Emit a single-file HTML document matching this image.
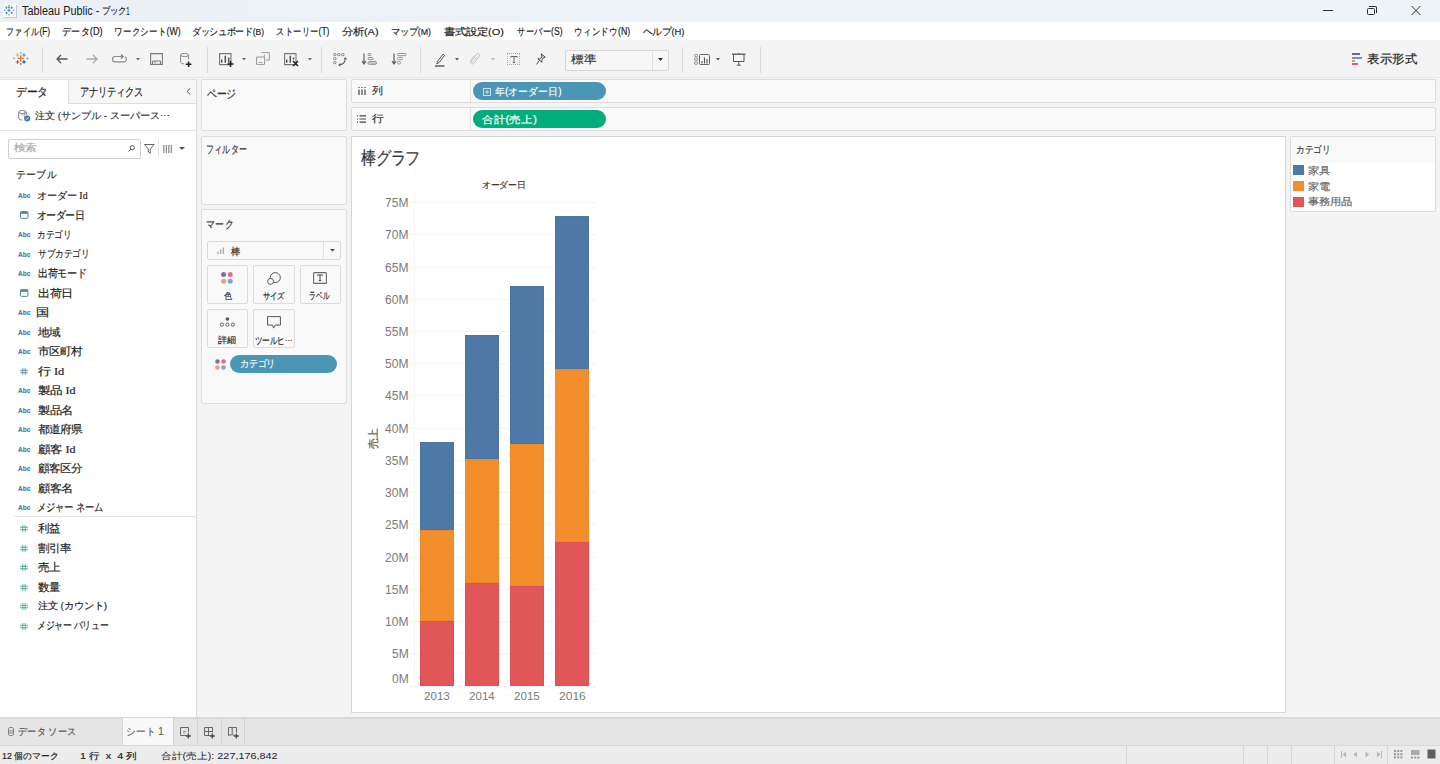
<!DOCTYPE html>
<html><head><meta charset="utf-8">
<style>
*{box-sizing:border-box;margin:0;padding:0}
html,body{width:1440px;height:764px;overflow:hidden;background:#f4f4f4;font-family:"Liberation Sans",sans-serif;color:#333;font-size:12px}
.a{position:absolute}
.t{position:absolute;white-space:pre;line-height:1;transform-origin:0 0;-webkit-text-stroke:0.2px currentColor}
svg{position:absolute;overflow:visible}
.shelf{position:absolute;background:#f9f9f9;border:1px solid #dcdcdc;border-radius:2px}
.btn{position:absolute;background:#f9f9f9;border:1px solid #dcdcdc;border-radius:2px}
.gl{position:absolute;left:410px;width:185px;height:1px;background:#f3f3f3}
.vs{position:absolute;width:1px;background:#d9d9d9}
</style></head><body>
<!-- title bar -->
<div class="a" style="left:0;top:0;width:1440px;height:22px;background:linear-gradient(90deg,#ebf0f7 0%,#eef3f9 60%,#eef3f8 100%)"></div>
<div class="a" style="left:2.5px;top:3.8px;width:13px;height:13px;background:#f8f9fb;box-shadow:1px 1px 0 #c5cad0"></div>
<svg style="left:2.5px;top:3.8px" width="13" height="13" viewBox="0 0 13 13"><g fill="#4a8bc6"><path d="M6 2.4v1.8M5.1 3.3h1.8" stroke="#4a8bc6" stroke-width="1"/><circle cx="6" cy="1.5" r="0.7"/><circle cx="6" cy="10.8" r="0.7"/><circle cx="1.8" cy="6.2" r="0.7"/><circle cx="10.6" cy="6.2" r="0.7"/></g><g stroke="#4a8bc6" stroke-width="1.1"><path d="M6 4.6v3.4M4.3 6.3h3.4"/><path d="M3.5 2.6v2.2M2.4 3.7h2.2"/><path d="M8.7 2.6v2.2M7.6 3.7h2.2"/><path d="M3.5 7.7v2.2M2.4 8.8h2.2"/><path d="M8.7 7.7v2.2M7.6 8.8h2.2"/></g></svg>
<div class="a" style="left:1323px;top:10px;width:10px;height:1px;background:#2a2a2a"></div>
<div class="a" style="left:1367px;top:8px;width:8px;height:7px;border:1px solid #2a2a2a;border-radius:1.5px"></div>
<div class="a" style="left:1369px;top:6px;width:8px;height:7px;border-top:1px solid #2a2a2a;border-right:1px solid #2a2a2a;border-radius:0 2px 0 0"></div>
<svg style="left:1411px;top:6px" width="10" height="9" viewBox="0 0 10 9"><path d="M0.5 0L9.5 9M9.5 0L0.5 9" stroke="#2a2a2a" stroke-width="1"/></svg>
<!-- menu -->
<div class="a" style="left:0;top:22px;width:1440px;height:18px;background:#fff"></div>
<!-- toolbar -->
<div class="a" style="left:0;top:40px;width:1440px;height:38px;background:#f4f4f4"></div>
<!-- tableau logo -->
<svg style="left:14px;top:52px" width="14" height="13" viewBox="0 0 14 13">
 <path d="M6.7 3.2v6.4M3.5 6.4h6.4" stroke="#e8762d" stroke-width="1.4"/>
 <path d="M3.5 1.2v3.6M1.7 3h3.6" stroke="#f2a93b" stroke-width="1"/>
 <path d="M10 1.2v3.6M8.2 3h3.6" stroke="#5b8fb0" stroke-width="1"/>
 <path d="M3.5 8.2v3.6M1.7 10h3.6" stroke="#e03b4f" stroke-width="1"/>
 <path d="M10 8.2v3.6M8.2 10h3.6" stroke="#1f4e8c" stroke-width="1"/>
 <path d="M6.7 0v2M5.9 1h1.6" stroke="#7aa8c9" stroke-width="0.8"/>
 <path d="M6.7 11v2M5.9 12h1.6" stroke="#5b6fa8" stroke-width="0.8"/>
 <path d="M0 5.6v1.6M-0.8 6.4h1.6" stroke="#6c9fc0" stroke-width="0.8"/>
 <path d="M13.4 5.6v1.6M12.6 6.4h1.6" stroke="#4e6ea5" stroke-width="0.8"/>
</svg>
<div class="vs" style="left:42px;top:47px;height:26px;background:#dadada"></div>
<!-- back/fwd -->
<svg style="left:56px;top:54px" width="12" height="10" viewBox="0 0 12 10"><path d="M11.5 5H1M5 1L1 5l4 4" fill="none" stroke="#555" stroke-width="1.3"/></svg>
<svg style="left:86px;top:54px" width="12" height="10" viewBox="0 0 12 10"><path d="M0.5 5H11M7 1l4 4-4 4" fill="none" stroke="#a9a9a9" stroke-width="1.3"/></svg>
<!-- redo loop -->
<svg style="left:112px;top:54px" width="15" height="9" viewBox="0 0 15 9"><path d="M10 2.5H3.2a2.7 2.7 0 0 0 0 5.4h8.6a2.7 2.7 0 0 0 1.2-5.1" fill="none" stroke="#8a8a8a" stroke-width="1.1"/><path d="M9 0.5l2.2 2-2.2 2" fill="none" stroke="#777" stroke-width="1.1"/></svg>
<svg style="left:136px;top:58px" width="4" height="3" viewBox="0 0 4 3"><path d="M0 0h4L2 2.4z" fill="#666"/></svg>
<!-- save -->
<svg style="left:150px;top:53px" width="13" height="12" viewBox="0 0 13 12"><path d="M0.6 0.6h11.8v10.8H0.6z" fill="none" stroke="#7a7a7a" stroke-width="1.1"/><path d="M2.5 11V8h8v3" fill="none" stroke="#7a7a7a" stroke-width="1"/><path d="M4 9h2" stroke="#7a7a7a" stroke-width="1"/></svg>
<!-- add datasource -->
<svg style="left:180px;top:53px" width="12" height="14" viewBox="0 0 12 14"><ellipse cx="4.6" cy="2" rx="4" ry="1.6" fill="none" stroke="#888" stroke-width="1"/><path d="M0.6 2v7.2c0 1 1.6 1.6 3.5 1.6" fill="none" stroke="#888" stroke-width="1"/><path d="M8.6 2v4.5" fill="none" stroke="#888" stroke-width="1"/><path d="M8.6 8.5v5.5M5.8 11.2h5.6" stroke="#222" stroke-width="1.5"/></svg>
<div class="vs" style="left:207px;top:47px;height:26px;background:#dadada"></div>
<!-- new worksheet -->
<svg style="left:219px;top:53px" width="15" height="14" viewBox="0 0 15 14"><path d="M0.6 0.6h11.4v11H0.6z" fill="none" stroke="#777" stroke-width="1.1"/><path d="M2.7 9.8V6.5M6.3 9.8V2.8M9.7 9.8V4.6" stroke="#555" stroke-width="1.5"/><path d="M11.5 8v6M8.5 11h6" stroke="#222" stroke-width="1.5"/></svg>
<svg style="left:242px;top:58px" width="4" height="3" viewBox="0 0 4 3"><path d="M0 0h4L2 2.4z" fill="#666"/></svg>
<!-- duplicate -->
<svg style="left:256px;top:52px" width="14" height="13" viewBox="0 0 14 13"><path d="M5.5 0.6h7.9v7.4H10" fill="none" stroke="#9a9a9a" stroke-width="1"/><path d="M0.6 5h8v7.4h-8z" fill="none" stroke="#9a9a9a" stroke-width="1"/><path d="M8.5 2.5v3.5M2.5 10.5h4" stroke="#aaa" stroke-width="1"/></svg>
<!-- clear sheet -->
<svg style="left:284px;top:53px" width="15" height="14" viewBox="0 0 15 14"><path d="M0.6 0.6h11.4v11H0.6z" fill="none" stroke="#777" stroke-width="1.1"/><path d="M2.7 9.8V6.5M6.3 9.8V2.8M9.5 6.5V4.6" stroke="#555" stroke-width="1.5"/><path d="M9 8l5 5M14 8l-5 5" stroke="#222" stroke-width="1.5"/></svg>
<svg style="left:308px;top:58px" width="4" height="3" viewBox="0 0 4 3"><path d="M0 0h4L2 2.4z" fill="#666"/></svg>
<div class="vs" style="left:321px;top:47px;height:26px;background:#dadada"></div>
<!-- swap -->
<svg style="left:333px;top:53px" width="14" height="14" viewBox="0 0 14 14"><g fill="none" stroke="#777" stroke-width="0.9"><rect x="0.5" y="0.5" width="2.6" height="2.2" rx="1"/><rect x="4.5" y="0.5" width="2.6" height="2.2" rx="1"/><rect x="8.5" y="0.5" width="2.6" height="2.2" rx="1"/><rect x="0.5" y="4.5" width="2.6" height="2.2" rx="1"/><rect x="0.5" y="8.5" width="2.6" height="2.2" rx="1"/></g><path d="M12.3 5.5c0 3.5-2.5 6-6 6.5" fill="none" stroke="#555" stroke-width="1.1"/><path d="M11 6.2l1.4-1.6 1.2 1.8M7.5 10.5l-1.7 1.4 1.8 1.2" fill="none" stroke="#555" stroke-width="1"/></svg>
<!-- sort asc -->
<svg style="left:362px;top:53px" width="15" height="12" viewBox="0 0 15 12"><path d="M2 0.5v10M0 8l2 3 2-3" fill="none" stroke="#555" stroke-width="1.1"/><g fill="none" stroke="#888" stroke-width="0.9"><rect x="6" y="0.5" width="3" height="2.2" rx="1"/><rect x="6" y="4.5" width="5" height="2.2" rx="1"/><rect x="6" y="8.5" width="8.5" height="2.8" rx="1.2" fill="#ccc"/></g></svg>
<!-- sort desc -->
<svg style="left:392px;top:53px" width="15" height="12" viewBox="0 0 15 12"><path d="M2 0.5v10M0 8l2 3 2-3" fill="none" stroke="#555" stroke-width="1.1"/><g fill="none" stroke="#888" stroke-width="0.9"><rect x="5.5" y="0.5" width="8.5" height="2.2" rx="1"/><rect x="5.5" y="4.5" width="5" height="2.2" rx="1"/><rect x="5.5" y="8.5" width="3" height="2.4" rx="1"/></g></svg>
<div class="vs" style="left:420px;top:47px;height:26px;background:#dadada"></div>
<!-- highlight -->
<svg style="left:435px;top:53px" width="11" height="14" viewBox="0 0 11 14"><path d="M3 10L1.8 11l0.6-2.5L8 1.2l1.6 1.2L4 9.6z" fill="none" stroke="#555" stroke-width="1"/><path d="M0 13h9.5" stroke="#555" stroke-width="1.4"/></svg>
<svg style="left:455px;top:58px" width="4" height="3" viewBox="0 0 4 3"><path d="M0 0h4L2 2.4z" fill="#555"/></svg>
<!-- paperclip -->
<svg style="left:470px;top:53px" width="11" height="12" viewBox="0 0 11 12"><path d="M6.8 4L3.2 8.6a1 1 0 0 1-1.6-1.2L6.4 1.5a1.7 1.7 0 0 1 2.8 2L4.3 10.3a2.4 2.4 0 0 1-3.8-2.8L4.4 2.6" fill="none" stroke="#c4c4c4" stroke-width="1"/></svg>
<svg style="left:491px;top:58px" width="4" height="3" viewBox="0 0 4 3"><path d="M0 0h4L2 2.4z" fill="#b8b8b8"/></svg>
<!-- T label -->
<div class="a" style="left:507px;top:53px;width:13px;height:12px;border:1px dotted #aaa"></div>
<svg style="left:509.5px;top:55.5px" width="8" height="7" viewBox="0 0 8 7"><path d="M0.8 1.6V0.5h6.4v1.1M4 0.5v6.2M2.8 6.6h2.4" fill="none" stroke="#555" stroke-width="0.9"/></svg>
<!-- pin -->
<svg style="left:536px;top:53px" width="10" height="12" viewBox="0 0 10 12"><path d="M5.2 0.8l4 3.4-2 0.6-1.5 2.7 0.3 1.8-4.2-3.6 1.8 0.2 2.5-1.9z" fill="none" stroke="#444" stroke-width="1"/><path d="M3.3 7.4L0.6 11.4" stroke="#444" stroke-width="1"/></svg>
<!-- dropdown 標準 -->
<div class="a" style="left:565px;top:49.5px;width:104px;height:21px;background:#f7f7f7;border:1px solid #d6d6d6;border-radius:2px"></div>
<div class="a" style="left:652px;top:50px;width:1px;height:20px;background:#e0e0e0"></div>
<svg style="left:658px;top:58px" width="5" height="3" viewBox="0 0 5 3"><path d="M0 0h5L2.5 3z" fill="#333"/></svg>
<div class="vs" style="left:682px;top:47px;height:26px;background:#dadada"></div>
<!-- cards -->
<svg style="left:694px;top:54px" width="16" height="11" viewBox="0 0 16 11"><g fill="none" stroke="#777" stroke-width="0.9"><rect x="0.5" y="0.5" width="3" height="2.2" rx="1"/><rect x="0.5" y="4.2" width="3" height="2.2" rx="1"/><rect x="0.5" y="7.9" width="3" height="2.4" rx="1"/></g><rect x="5.5" y="0.5" width="10" height="10" rx="1" fill="none" stroke="#666" stroke-width="1"/><path d="M8 9.5V7M10.5 9.5V3.5M13 9.5V5" stroke="#555" stroke-width="1.1"/></svg>
<svg style="left:716px;top:58px" width="4" height="3" viewBox="0 0 4 3"><path d="M0 0h4L2 2.4z" fill="#555"/></svg>
<!-- presentation -->
<svg style="left:732px;top:53px" width="14" height="13" viewBox="0 0 14 13"><path d="M0 1.2h13.5" stroke="#555" stroke-width="1.3"/><path d="M1.5 1.5v7h10.5v-7" fill="none" stroke="#555" stroke-width="1"/><path d="M6.75 0v1M6.75 8.5V12M4.8 12.2h4" stroke="#555" stroke-width="1"/></svg>
<div class="vs" style="left:760px;top:47px;height:26px;background:#dadada"></div>
<!-- show me icon -->
<div class="a" style="left:1351.5px;top:53px;width:8px;height:2px;background:#7a5f8f"></div>
<div class="a" style="left:1351.5px;top:56.5px;width:10.5px;height:2px;background:#6e95c2"></div>
<div class="a" style="left:1351.5px;top:59.8px;width:3.5px;height:2px;background:#ef9b5d"></div>
<div class="a" style="left:1351.5px;top:62.8px;width:6px;height:2px;background:#e9566d"></div>
<!-- toolbar bottom edge -->
<div class="a" style="left:0;top:77px;width:1440px;height:1px;background:#e9e9e9"></div>

<!-- left pane -->
<div class="a" style="left:0;top:79px;width:197px;height:639px;background:#fff;border-right:1px solid #dcdcdc;border-top:1px solid #e4e4e4"></div>
<div class="a" style="left:68px;top:79px;width:129px;height:25px;background:#f7f7f7;border-left:1px solid #dedede;border-bottom:1px solid #dedede;border-top:1px solid #e4e4e4;border-right:1px solid #dcdcdc"></div>
<svg style="left:186px;top:87.5px" width="5" height="7" viewBox="0 0 5 7"><path d="M4.3 0.4L1 3.5l3.3 3.1" fill="none" stroke="#555" stroke-width="1"/></svg>
<!-- datasource icon -->
<svg style="left:18px;top:110px" width="13" height="12" viewBox="0 0 13 12"><ellipse cx="4.5" cy="2" rx="3.8" ry="1.5" fill="none" stroke="#777" stroke-width="0.9"/><path d="M0.7 2v6.5c0 0.9 1.6 1.5 3.6 1.5M8.3 2v3" fill="none" stroke="#777" stroke-width="0.9"/><path d="M6.5 1.5v7M2.5 4.8h5" stroke="#999" stroke-width="0.7"/><circle cx="9.2" cy="8.4" r="3" fill="#2f7fb8"/><path d="M7.8 8.4l1 1 1.7-1.9" fill="none" stroke="#fff" stroke-width="0.8"/></svg>
<div class="a" style="left:0;top:130px;width:196px;height:1px;background:#e6e6e6"></div>
<!-- search -->
<div class="a" style="left:7.5px;top:138.5px;width:133px;height:20px;background:#fff;border:1px solid #cfcfcf;border-radius:2px"></div>
<svg style="left:128px;top:145px" width="7" height="7" viewBox="0 0 7 7"><circle cx="4.3" cy="2.7" r="2.1" fill="none" stroke="#444" stroke-width="0.9"/><path d="M2.8 4.2L0.6 6.4" stroke="#444" stroke-width="1"/></svg>
<svg style="left:143.5px;top:144px" width="11" height="10" viewBox="0 0 11 10"><path d="M0.5 0.5h9.6L6.3 5v4.3L4.3 8V5z" fill="none" stroke="#555" stroke-width="0.9"/></svg>
<div class="a" style="left:158px;top:140px;width:1px;height:17px;background:#e0e0e0"></div>
<svg style="left:163px;top:145px" width="10" height="8" viewBox="0 0 10 8"><path d="M0.8 0v8M3.3 0v8M5.8 0v8M8.3 0v8" stroke="#8a8a8a" stroke-width="1.2"/></svg>
<svg style="left:179px;top:147.4px" width="6" height="3" viewBox="0 0 6 3"><path d="M0 0h6L3 3z" fill="#555"/></svg>
<!-- separator before measures -->
<div class="a" style="left:14px;top:516px;width:182px;height:1px;background:#e4e4e4"></div>
<svg style="left:20px;top:210.5px" width="8.5" height="8" viewBox="0 0 8.5 8"><rect x="0.5" y="0.6" width="7.4" height="6.8" rx="1" fill="none" stroke="#5087a6" stroke-width="1"/><rect x="0.5" y="0.6" width="7.4" height="2.2" fill="#5087a6"/></svg>
<svg style="left:20px;top:288.5px" width="8.5" height="8" viewBox="0 0 8.5 8"><rect x="0.5" y="0.6" width="7.4" height="6.8" rx="1" fill="none" stroke="#5087a6" stroke-width="1"/><rect x="0.5" y="0.6" width="7.4" height="2.2" fill="#5087a6"/></svg>
<svg style="left:20px;top:367.9px" width="8" height="7" viewBox="0 0 8 7"><path d="M2.8 0v7M5.2 0v7M0 2.3h8M0 4.7h8" stroke="#5a88aa" stroke-width="0.9"/></svg>
<svg style="left:20px;top:525.2px" width="8" height="7" viewBox="0 0 8 7"><path d="M2.8 0v7M5.2 0v7M0 2.3h8M0 4.7h8" stroke="#4aa882" stroke-width="0.9"/></svg>
<svg style="left:20px;top:544.7px" width="8" height="7" viewBox="0 0 8 7"><path d="M2.8 0v7M5.2 0v7M0 2.3h8M0 4.7h8" stroke="#4aa882" stroke-width="0.9"/></svg>
<svg style="left:20px;top:564.2px" width="8" height="7" viewBox="0 0 8 7"><path d="M2.8 0v7M5.2 0v7M0 2.3h8M0 4.7h8" stroke="#4aa882" stroke-width="0.9"/></svg>
<svg style="left:20px;top:583.7px" width="8" height="7" viewBox="0 0 8 7"><path d="M2.8 0v7M5.2 0v7M0 2.3h8M0 4.7h8" stroke="#4aa882" stroke-width="0.9"/></svg>
<svg style="left:20px;top:603.2px" width="8" height="7" viewBox="0 0 8 7"><path d="M2.8 0v7M5.2 0v7M0 2.3h8M0 4.7h8" stroke="#4aa882" stroke-width="0.9"/></svg>
<svg style="left:20px;top:622.7px" width="8" height="7" viewBox="0 0 8 7"><path d="M2.8 0v7M5.2 0v7M0 2.3h8M0 4.7h8" stroke="#4aa882" stroke-width="0.9"/></svg>

<!-- shelves -->
<div class="shelf" style="left:201px;top:79px;width:146px;height:52px"></div>
<div class="shelf" style="left:201px;top:136px;width:146px;height:69px"></div>
<div class="shelf" style="left:201px;top:209px;width:146px;height:195px"></div>
<!-- marks dropdown -->
<div class="a" style="left:207px;top:241px;width:134px;height:19px;background:#f9f9f9;border:1px solid #d9d9d9;border-radius:2px"></div>
<div class="a" style="left:323px;top:242px;width:1px;height:17px;background:#e2e2e2"></div>
<svg style="left:329.5px;top:249.2px" width="5" height="3" viewBox="0 0 5 3"><path d="M0 0h5L2.5 2.5z" fill="#444"/></svg>
<svg style="left:217px;top:247px" width="8" height="7" viewBox="0 0 8 7"><path d="M1 7V4.5M3.7 7V2M6.4 7V0.5" stroke="#aaa" stroke-width="1.3"/></svg>
<!-- mark buttons -->
<div class="btn" style="left:207px;top:265px;width:41px;height:39px"></div>
<div class="btn" style="left:253px;top:265px;width:42px;height:39px"></div>
<div class="btn" style="left:300px;top:265px;width:41px;height:39px"></div>
<div class="btn" style="left:207px;top:309px;width:41px;height:39px"></div>
<div class="btn" style="left:253px;top:309px;width:42px;height:39px"></div>
<svg style="left:221px;top:272px" width="12" height="12" viewBox="0 0 12 12"><circle cx="2.6" cy="2.6" r="2.5" fill="#8c6d9d"/><circle cx="9.2" cy="2.6" r="2.5" fill="#ec6a83"/><circle cx="2.6" cy="9.2" r="2.5" fill="#eba177"/><circle cx="9.2" cy="9.2" r="2.5" fill="#7ea6cf"/></svg>
<svg style="left:266.5px;top:271.5px" width="14" height="13" viewBox="0 0 14 13"><circle cx="8.3" cy="5.6" r="5" fill="none" stroke="#555" stroke-width="1"/><circle cx="3.6" cy="9.4" r="3" fill="#f9f9f9" stroke="#555" stroke-width="1"/></svg>
<svg style="left:313px;top:272px" width="14" height="12" viewBox="0 0 14 12"><rect x="0.6" y="0.6" width="12.8" height="10.8" rx="1" fill="none" stroke="#666" stroke-width="1.1"/><path d="M4.3 3.6V3h5.4v0.6M7 3v5.5M5.7 8.5h2.6" fill="none" stroke="#444" stroke-width="1"/></svg>
<svg style="left:219.5px;top:317px" width="15" height="10" viewBox="0 0 15 10"><circle cx="7.4" cy="2" r="1.8" fill="#555"/><circle cx="1.9" cy="7.6" r="1.6" fill="none" stroke="#666" stroke-width="1"/><circle cx="7.4" cy="7.6" r="1.6" fill="none" stroke="#666" stroke-width="1"/><circle cx="12.9" cy="7.6" r="1.6" fill="none" stroke="#666" stroke-width="1"/></svg>
<svg style="left:267px;top:316px" width="14" height="13" viewBox="0 0 14 13"><path d="M0.6 0.6h12.8v8.5H8.2l-1.6 3-1.1-3H0.6z" fill="none" stroke="#555" stroke-width="1"/></svg>
<!-- category pill in marks -->
<svg style="left:215px;top:359px" width="11" height="11" viewBox="0 0 11 11"><circle cx="2.5" cy="2.5" r="2.3" fill="#8c6d9d"/><circle cx="8.5" cy="2.5" r="2.3" fill="#ec6a83"/><circle cx="2.5" cy="8.5" r="2.3" fill="#eba177"/><circle cx="8.5" cy="8.5" r="2.3" fill="#7ea6cf"/></svg>
<div class="a" style="left:230px;top:355px;width:107px;height:18px;border-radius:9px;background:#4b96b4"></div>

<!-- column/row shelves -->
<div class="shelf" style="left:351px;top:79px;width:1085px;height:24px"></div>
<div class="shelf" style="left:351px;top:107px;width:1085px;height:24px"></div>
<div class="a" style="left:470px;top:80px;width:1px;height:22px;background:#e2e2e2"></div>
<div class="a" style="left:470px;top:108px;width:1px;height:22px;background:#e2e2e2"></div>
<svg style="left:357.5px;top:87px" width="8" height="8" viewBox="0 0 8 8"><path d="M1 2.5V8M4 2.5V8M7 2.5V8" stroke="#444" stroke-width="1.2"/><path d="M1 0v1M4 0v1M7 0v1" stroke="#444" stroke-width="1.2"/></svg>
<svg style="left:357px;top:115px" width="9" height="8" viewBox="0 0 9 8"><path d="M0 0.8h1M0 4h1M0 7.2h1M2.5 0.8H9M2.5 4H9M2.5 7.2H9" stroke="#444" stroke-width="1.2"/></svg>
<div class="a" style="left:472.5px;top:82px;width:133px;height:18px;border-radius:9px;background:#4b96b4"></div>
<svg style="left:483px;top:88px" width="8" height="8" viewBox="0 0 8 8"><rect x="0.5" y="0.5" width="7" height="7" fill="none" stroke="#e6f0f5" stroke-width="0.8"/><path d="M4 1.8v4.4M1.8 4h4.4" stroke="#e6f0f5" stroke-width="0.8"/></svg>
<div class="a" style="left:472.5px;top:110px;width:133px;height:18px;border-radius:9px;background:#00ad7b"></div>

<!-- viz -->
<div class="a" style="left:351px;top:136px;width:935px;height:577px;background:#fff;border:1px solid #d6d6d6"></div>
<div class="gl" style="top:685.50px"></div>
<div class="gl" style="top:653.27px"></div>
<div class="gl" style="top:621.04px"></div>
<div class="gl" style="top:588.81px"></div>
<div class="gl" style="top:556.58px"></div>
<div class="gl" style="top:524.35px"></div>
<div class="gl" style="top:492.12px"></div>
<div class="gl" style="top:459.89px"></div>
<div class="gl" style="top:427.66px"></div>
<div class="gl" style="top:395.43px"></div>
<div class="gl" style="top:363.20px"></div>
<div class="gl" style="top:330.97px"></div>
<div class="gl" style="top:298.74px"></div>
<div class="gl" style="top:266.51px"></div>
<div class="gl" style="top:234.28px"></div>
<div class="gl" style="top:202.05px"></div>
<div class="a" style="left:414px;top:193px;width:1px;height:496px;background:#f4f4f4"></div>
<div class="a" style="left:459px;top:686px;width:1px;height:3px;background:#e8e8e8"></div>
<div class="a" style="left:504px;top:686px;width:1px;height:3px;background:#e8e8e8"></div>
<div class="a" style="left:549px;top:686px;width:1px;height:3px;background:#e8e8e8"></div>
<div class="a" style="left:594px;top:686px;width:1px;height:3px;background:#e8e8e8"></div>
<div class="a" style="left:420px;top:441.6px;width:34px;height:88.1px;background:#4e79a7;box-shadow:inset 0 0 0 0.5px #47709c"></div>
<div class="a" style="left:420px;top:529.7px;width:34px;height:91.2px;background:#f28e2b;box-shadow:inset 0 0 0 0.5px #ea8628"></div>
<div class="a" style="left:420px;top:620.9px;width:34px;height:65.1px;background:#e15759;box-shadow:inset 0 0 0 0.5px #da4d50"></div>
<div class="a" style="left:465px;top:334.8px;width:34px;height:124.5px;background:#4e79a7;box-shadow:inset 0 0 0 0.5px #47709c"></div>
<div class="a" style="left:465px;top:459.3px;width:34px;height:123.6px;background:#f28e2b;box-shadow:inset 0 0 0 0.5px #ea8628"></div>
<div class="a" style="left:465px;top:582.9px;width:34px;height:103.1px;background:#e15759;box-shadow:inset 0 0 0 0.5px #da4d50"></div>
<div class="a" style="left:510px;top:286.0px;width:34px;height:158.4px;background:#4e79a7;box-shadow:inset 0 0 0 0.5px #47709c"></div>
<div class="a" style="left:510px;top:444.4px;width:34px;height:141.5px;background:#f28e2b;box-shadow:inset 0 0 0 0.5px #ea8628"></div>
<div class="a" style="left:510px;top:585.9px;width:34px;height:100.1px;background:#e15759;box-shadow:inset 0 0 0 0.5px #da4d50"></div>
<div class="a" style="left:555px;top:215.7px;width:34px;height:153.0px;background:#4e79a7;box-shadow:inset 0 0 0 0.5px #47709c"></div>
<div class="a" style="left:555px;top:368.7px;width:34px;height:173.2px;background:#f28e2b;box-shadow:inset 0 0 0 0.5px #ea8628"></div>
<div class="a" style="left:555px;top:541.9px;width:34px;height:144.1px;background:#e15759;box-shadow:inset 0 0 0 0.5px #da4d50"></div>
<!-- legend -->
<div class="a" style="left:1290px;top:136px;width:146px;height:76px;background:#fff;border:1px solid #dcdcdc;border-radius:2px"></div>
<div class="a" style="left:1291px;top:137px;width:144px;height:26px;background:#f9f9f9"></div>
<div class="a" style="left:1293px;top:165px;width:10.5px;height:10px;background:#4e79a7"></div>
<div class="a" style="left:1293px;top:181px;width:10.5px;height:10px;background:#f28e2b"></div>
<div class="a" style="left:1293px;top:196.6px;width:10.5px;height:10px;background:#e15759"></div>

<!-- bottom tabs -->
<div class="a" style="left:0;top:716.5px;width:1440px;height:28.5px;background:#e5e5e5;border-top:2px solid #d9d9d9"></div>
<div class="a" style="left:121.5px;top:718px;width:51px;height:27px;background:#f8f8f8;border-left:1px solid #d8d8d8"></div>
<div class="vs" style="left:173px;top:718px;height:27px;background:#d2d2d2"></div>
<div class="vs" style="left:196.5px;top:718px;height:27px;background:#d2d2d2"></div>
<div class="vs" style="left:220.5px;top:718px;height:27px;background:#d2d2d2"></div>
<div class="vs" style="left:244.4px;top:718px;height:27px;background:#d2d2d2"></div>
<svg style="left:8px;top:727px" width="6" height="9" viewBox="0 0 6 9"><path d="M0.5 1.5v6c0 0.6 1 1 2.5 1s2.5-0.4 2.5-1v-6c0-0.6-1-1-2.5-1s-2.5 0.4-2.5 1zM0.5 3.5c0.5 0.6 4.5 0.6 5 0M0.5 5.5c0.5 0.6 4.5 0.6 5 0" fill="none" stroke="#777" stroke-width="0.9"/></svg>
<svg style="left:180px;top:726.5px" width="12" height="12" viewBox="0 0 12 12"><path d="M6 8.5H0.5V0.5h8V5.5" fill="none" stroke="#666" stroke-width="1"/><path d="M3 4.5h3M3 6h2" stroke="#888" stroke-width="0.8"/><path d="M8.3 6.5v5M5.8 9h5" stroke="#444" stroke-width="1.3"/></svg>
<svg style="left:203.5px;top:726.5px" width="12" height="12" viewBox="0 0 12 12"><path d="M6 8.5H0.5V0.5h8V5.5M0.5 4.5h8M4.5 0.5v8" fill="none" stroke="#666" stroke-width="1"/><path d="M8.3 6.5v5M5.8 9h5" stroke="#444" stroke-width="1.3"/></svg>
<svg style="left:227.5px;top:726.5px" width="12" height="12" viewBox="0 0 12 12"><path d="M6 8.5L4.2 7.5 0.5 8.5V0.5l3.7-0.1 4.3 0.1V5.5M4.2 0.5v7" fill="none" stroke="#666" stroke-width="1"/><path d="M8.3 6.5v5M5.8 9h5" stroke="#444" stroke-width="1.3"/></svg>
<!-- status bar -->
<div class="a" style="left:0;top:745px;width:1440px;height:19px;background:#ececec;border-top:1px solid #d9d9d9"></div>
<div class="vs" style="left:1126px;top:746px;height:18px;background:#d6d6d6"></div>
<div class="vs" style="left:1243px;top:746px;height:18px;background:#d6d6d6"></div>
<div class="vs" style="left:1267px;top:746px;height:18px;background:#d6d6d6"></div>
<div class="vs" style="left:1291px;top:746px;height:18px;background:#d6d6d6"></div>
<div class="vs" style="left:1334px;top:746px;height:18px;background:#d6d6d6"></div>
<div class="vs" style="left:1387px;top:746px;height:18px;background:#d6d6d6"></div>
<svg style="left:1341px;top:751px" width="42" height="7" viewBox="0 0 42 7"><g fill="#b5b5b5"><path d="M0 0h1v7H0zM5 0.5v6L1.8 3.5z"/><path d="M16 0.5v6L12.5 3.5z"/><path d="M24.5 0.5v6L28 3.5z"/><path d="M36 0.5v6L39.5 3.5zM40 0h1v7h-1z"/></g></svg>
<svg style="left:1394px;top:750px" width="42" height="9" viewBox="0 0 42 9"><g fill="#999"><rect x="0" y="0" width="2" height="2"/><rect x="3.2" y="0" width="2" height="2"/><rect x="6.4" y="0" width="2" height="2"/><rect x="0" y="3.2" width="2" height="2"/><rect x="3.2" y="3.2" width="2" height="2"/><rect x="6.4" y="3.2" width="2" height="2"/><rect x="0" y="6.4" width="2" height="2"/><rect x="3.2" y="6.4" width="2" height="2"/><rect x="6.4" y="6.4" width="2" height="2"/></g><rect x="17" y="0" width="8.5" height="5" fill="#aaa"/><g fill="#999"><rect x="17" y="6.5" width="2" height="2"/><rect x="20.2" y="6.5" width="2" height="2"/><rect x="23.4" y="6.5" width="2" height="2"/></g><rect x="33.5" y="-0.5" width="8" height="9" fill="#5e5e5e"/></svg>
<div class="t" style="left:21.70px;top:5.00px;font-size:12px;color:#1b1b1b;-webkit-text-stroke:0;transform:scale(0.9065,1.0000);">Tableau Public -</div>
<div class="t" style="left:101.82px;top:5.95px;font-size:12px;color:#1b1b1b;transform:scale(0.6818,0.8000);">ブック</div>
<div class="t" style="left:126.43px;top:5.33px;font-size:12px;color:#1b1b1b;-webkit-text-stroke:0;transform:scale(0.5667,0.9667);">1</div>
<div class="t" style="left:5.55px;top:26.23px;font-size:12px;color:#1a1a1a;transform:scale(0.6960,0.8667);">ファイル(F)</div>
<div class="t" style="left:61.73px;top:26.23px;font-size:12px;color:#1a1a1a;transform:scale(0.7725,0.8667);">データ(D)</div>
<div class="t" style="left:114.02px;top:26.23px;font-size:12px;color:#1a1a1a;transform:scale(0.7306,0.8667);">ワークシート(W)</div>
<div class="t" style="left:191.78px;top:27.10px;font-size:12px;color:#1a1a1a;transform:scale(0.7222,0.8000);">ダッシュボード(B)</div>
<div class="t" style="left:275.79px;top:26.23px;font-size:12px;color:#1a1a1a;transform:scale(0.7095,0.8667);">ストーリー(T)</div>
<div class="t" style="left:341.70px;top:27.10px;font-size:12px;color:#1a1a1a;transform:scale(0.9150,0.8000);">分析(A)</div>
<div class="t" style="left:390.96px;top:27.10px;font-size:12px;color:#1a1a1a;transform:scale(0.7415,0.8000);">マップ(M)</div>
<div class="t" style="left:444.40px;top:27.10px;font-size:12px;color:#1a1a1a;transform:scale(0.9169,0.8000);">書式設定(O)</div>
<div class="t" style="left:517.00px;top:26.23px;font-size:12px;color:#1a1a1a;transform:scale(0.7109,0.8667);">サーバー(S)</div>
<div class="t" style="left:574.27px;top:26.23px;font-size:12px;color:#1a1a1a;transform:scale(0.7333,0.8667);">ウィンドウ(N)</div>
<div class="t" style="left:643.00px;top:27.10px;font-size:12px;color:#1a1a1a;transform:scale(0.7885,0.8000);">ヘルプ(H)</div>
<div class="t" style="left:571.25px;top:53.90px;font-size:13px;color:#333;transform:scale(0.9865,0.8615);">標準</div>
<div class="t" style="left:1366.70px;top:53.00px;font-size:13px;color:#222;transform:scale(0.9673,0.9385);">表示形式</div>
<div class="t" style="left:15.89px;top:85.70px;font-size:13px;color:#222;transform:scale(0.8083,0.9000);">データ</div>
<div class="t" style="left:79.80px;top:85.70px;font-size:13px;color:#222;transform:scale(0.6955,0.9000);">アナリティクス</div>
<div class="t" style="left:34.70px;top:111.30px;font-size:12px;color:#333;transform:scale(0.8326,0.8231);">注文 (サンプル - スーパース⋯</div>
<div class="t" style="left:13.50px;top:143.45px;font-size:12px;color:#a8a8a8;transform:scale(0.9292,0.8000);">検索</div>
<div class="t" style="left:15.62px;top:168.90px;font-size:13px;color:#222;transform:scale(0.7824,0.8000);">テーブル</div>
<div class="t" style="left:36.67px;top:190.60px;font-size:12px;color:#222;transform:scale(0.8250,0.8167);">オーダー <span style="font-family:'Liberation Serif',serif">Id</span></div>
<div class="t" style="left:36.71px;top:209.75px;font-size:12px;color:#222;transform:scale(0.7895,0.8750);">オーダー日</div>
<div class="t" style="left:36.79px;top:229.60px;font-size:12px;color:#222;transform:scale(0.7091,0.8167);">カテゴリ</div>
<div class="t" style="left:37.50px;top:249.10px;font-size:12px;color:#222;transform:scale(0.7087,0.8167);">サブカテゴリ</div>
<div class="t" style="left:37.50px;top:268.25px;font-size:12px;color:#222;transform:scale(0.8051,0.8750);">出荷モード</div>
<div class="t" style="left:37.50px;top:287.75px;font-size:12px;color:#222;transform:scale(0.9618,0.8750);">出荷日</div>
<div class="t" style="left:36.45px;top:307.25px;font-size:12px;color:#222;transform:scale(1.0500,0.8750);">国</div>
<div class="t" style="left:37.50px;top:326.75px;font-size:12px;color:#222;transform:scale(0.9250,0.8750);">地域</div>
<div class="t" style="left:37.50px;top:346.25px;font-size:12px;color:#222;transform:scale(0.9271,0.8750);">市区町村</div>
<div class="t" style="left:37.50px;top:365.75px;font-size:12px;color:#222;transform:scale(1.0360,0.8750);">行 <span style="font-family:'Liberation Serif',serif">Id</span></div>
<div class="t" style="left:37.50px;top:385.25px;font-size:12px;color:#222;transform:scale(1.0027,0.8750);">製品 <span style="font-family:'Liberation Serif',serif">Id</span></div>
<div class="t" style="left:37.50px;top:404.75px;font-size:12px;color:#222;transform:scale(0.9765,0.8750);">製品名</div>
<div class="t" style="left:37.50px;top:424.25px;font-size:12px;color:#222;transform:scale(0.9271,0.8750);">都道府県</div>
<div class="t" style="left:37.50px;top:443.75px;font-size:12px;color:#222;transform:scale(1.0027,0.8750);">顧客 <span style="font-family:'Liberation Serif',serif">Id</span></div>
<div class="t" style="left:37.50px;top:463.25px;font-size:12px;color:#222;transform:scale(0.9271,0.8750);">顧客区分</div>
<div class="t" style="left:37.50px;top:482.75px;font-size:12px;color:#222;transform:scale(0.9765,0.8750);">顧客名</div>
<div class="t" style="left:36.75px;top:501.71px;font-size:12px;color:#222;transform:scale(0.7541,0.8909);">メジャー ネーム</div>
<div class="t" style="left:37.50px;top:523.45px;font-size:12px;color:#222;transform:scale(0.9167,0.8750);">利益</div>
<div class="t" style="left:37.50px;top:542.95px;font-size:12px;color:#222;transform:scale(0.9167,0.8750);">割引率</div>
<div class="t" style="left:37.50px;top:562.45px;font-size:12px;color:#222;transform:scale(0.9167,0.8750);">売上</div>
<div class="t" style="left:37.50px;top:581.95px;font-size:12px;color:#222;transform:scale(0.9167,0.8750);">数量</div>
<div class="t" style="left:37.50px;top:601.45px;font-size:12px;color:#222;transform:scale(0.8277,0.8077);">注文 (カウント)</div>
<div class="t" style="left:36.78px;top:620.41px;font-size:12px;color:#222;transform:scale(0.7175,0.8909);">メジャー バリュー</div>
<div class="t" style="left:206.50px;top:87.61px;font-size:12px;color:#333;transform:scale(0.8086,0.9900);">ページ</div>
<div class="t" style="left:205.81px;top:144.25px;font-size:12px;color:#333;transform:scale(0.6862,0.9455);">フィルター</div>
<div class="t" style="left:206.43px;top:217.75px;font-size:12px;color:#333;transform:scale(0.7727,0.9545);">マーク</div>
<div class="t" style="left:230.80px;top:246.90px;font-size:11px;color:#333;transform:scale(0.8364,0.8900);">棒</div>
<div class="t" style="left:223.50px;top:291.85px;font-size:11px;color:#222;transform:scale(0.7182,0.8000);">色</div>
<div class="t" style="left:262.56px;top:291.85px;font-size:11px;color:#222;transform:scale(0.6438,0.8000);">サイズ</div>
<div class="t" style="left:309.06px;top:291.06px;font-size:11px;color:#222;transform:scale(0.6406,0.9444);">ラベル</div>
<div class="t" style="left:218.40px;top:336.10px;font-size:11px;color:#222;transform:scale(0.8091,0.8000);">詳細</div>
<div class="t" style="left:254.83px;top:335.61px;font-size:11px;color:#222;transform:scale(0.6717,0.8889);">ツールヒ⋯</div>
<div class="t" style="left:239.57px;top:359.45px;font-size:12px;color:#fff;transform:scale(0.7318,0.8000);">カテゴリ</div>
<div class="t" style="left:371.80px;top:86.25px;font-size:12px;color:#333;transform:scale(0.8750,0.8000);">列</div>
<div class="t" style="left:371.80px;top:114.45px;font-size:12px;color:#333;transform:scale(0.9333,0.8000);">行</div>
<div class="t" style="left:495.20px;top:85.70px;font-size:12px;color:#fff;transform:scale(0.8337,0.8538);">年(オーダー日)</div>
<div class="t" style="left:482.20px;top:113.90px;font-size:12px;color:#fff;transform:scale(0.9821,0.8538);">合計(売上)</div>
<div class="t" style="left:360.60px;top:148.75px;font-size:18px;color:#333;transform:scale(0.8214,0.9722);">棒グラフ</div>
<div class="t" style="left:482.31px;top:181.22px;font-size:11px;color:#333;transform:scale(0.7865,0.8000);">オーダー日</div>
<div class="t" style="left:1295.78px;top:145.30px;font-size:12px;color:#333;transform:scale(0.7227,0.8333);">カテゴリ</div>
<div class="t" style="left:1307.70px;top:166.00px;font-size:12px;color:#666;transform:scale(0.9391,0.8083);">家具</div>
<div class="t" style="left:1307.70px;top:181.70px;font-size:12px;color:#666;transform:scale(0.9000,0.8083);">家電</div>
<div class="t" style="left:1307.70px;top:197.40px;font-size:12px;color:#666;transform:scale(0.9146,0.8083);">事務用品</div>
<div class="t" style="left:17.73px;top:726.65px;font-size:12px;color:#555;transform:scale(0.7712,0.8455);">データ ソース</div>
<div class="t" style="left:126.16px;top:726.65px;font-size:12px;color:#666;transform:scale(0.8205,0.8455);">シート 1</div>
<div class="t" style="left:2.09px;top:751.40px;font-size:11px;color:#222;transform:scale(0.8119,0.8364);">12 個のマーク</div>
<div class="t" style="left:80.12px;top:751.40px;font-size:11px;color:#222;transform:scale(0.9807,0.8364);">1 行  x  4 列</div>
<div class="t" style="left:160.60px;top:751.40px;font-size:11px;color:#222;-webkit-text-stroke:0;transform:scale(0.9814,0.8364);">合計(売上): 227,176,842</div>
<div class="t" style="left:392.10px;top:673.00px;font-size:12px;color:#7a7a7a;-webkit-text-stroke:0;">0M</div>
<div class="t" style="left:392.10px;top:648.27px;font-size:12px;color:#7a7a7a;-webkit-text-stroke:0;">5M</div>
<div class="t" style="left:385.10px;top:616.04px;font-size:12px;color:#7a7a7a;-webkit-text-stroke:0;">10M</div>
<div class="t" style="left:385.10px;top:583.81px;font-size:12px;color:#7a7a7a;-webkit-text-stroke:0;">15M</div>
<div class="t" style="left:385.10px;top:551.58px;font-size:12px;color:#7a7a7a;-webkit-text-stroke:0;">20M</div>
<div class="t" style="left:385.10px;top:519.35px;font-size:12px;color:#7a7a7a;-webkit-text-stroke:0;">25M</div>
<div class="t" style="left:385.10px;top:487.12px;font-size:12px;color:#7a7a7a;-webkit-text-stroke:0;">30M</div>
<div class="t" style="left:385.10px;top:454.89px;font-size:12px;color:#7a7a7a;-webkit-text-stroke:0;">35M</div>
<div class="t" style="left:385.10px;top:422.66px;font-size:12px;color:#7a7a7a;-webkit-text-stroke:0;">40M</div>
<div class="t" style="left:385.10px;top:390.43px;font-size:12px;color:#7a7a7a;-webkit-text-stroke:0;">45M</div>
<div class="t" style="left:385.10px;top:358.20px;font-size:12px;color:#7a7a7a;-webkit-text-stroke:0;">50M</div>
<div class="t" style="left:385.10px;top:325.97px;font-size:12px;color:#7a7a7a;-webkit-text-stroke:0;">55M</div>
<div class="t" style="left:385.10px;top:293.74px;font-size:12px;color:#7a7a7a;-webkit-text-stroke:0;">60M</div>
<div class="t" style="left:385.10px;top:261.51px;font-size:12px;color:#7a7a7a;-webkit-text-stroke:0;">65M</div>
<div class="t" style="left:385.10px;top:229.28px;font-size:12px;color:#7a7a7a;-webkit-text-stroke:0;">70M</div>
<div class="t" style="left:385.10px;top:197.05px;font-size:12px;color:#7a7a7a;-webkit-text-stroke:0;">75M</div>
<div class="t" style="left:423.60px;top:691.06px;font-size:12px;color:#7a7a7a;-webkit-text-stroke:0;transform:scale(0.9667,0.9444);">2013</div>
<div class="t" style="left:468.60px;top:691.06px;font-size:12px;color:#7a7a7a;-webkit-text-stroke:0;transform:scale(0.9667,0.9444);">2014</div>
<div class="t" style="left:513.60px;top:691.06px;font-size:12px;color:#7a7a7a;-webkit-text-stroke:0;transform:scale(0.9667,0.9444);">2015</div>
<div class="t" style="left:558.60px;top:691.06px;font-size:12px;color:#7a7a7a;-webkit-text-stroke:0;transform:scale(1.0038,0.9444);">2016</div>
<div class="t" style="left:17.90px;top:192.44px;font-size:8px;color:#4a7fa3;font-weight:bold;transform:scale(0.8133,0.9600);">Abc</div>
<div class="t" style="left:17.90px;top:231.44px;font-size:8px;color:#4a7fa3;font-weight:bold;transform:scale(0.8133,0.9600);">Abc</div>
<div class="t" style="left:17.90px;top:250.94px;font-size:8px;color:#4a7fa3;font-weight:bold;transform:scale(0.8133,0.9600);">Abc</div>
<div class="t" style="left:17.90px;top:270.44px;font-size:8px;color:#4a7fa3;font-weight:bold;transform:scale(0.8133,0.9600);">Abc</div>
<div class="t" style="left:17.90px;top:309.44px;font-size:8px;color:#4a7fa3;font-weight:bold;transform:scale(0.8133,0.9600);">Abc</div>
<div class="t" style="left:17.90px;top:328.94px;font-size:8px;color:#4a7fa3;font-weight:bold;transform:scale(0.8133,0.9600);">Abc</div>
<div class="t" style="left:17.90px;top:348.44px;font-size:8px;color:#4a7fa3;font-weight:bold;transform:scale(0.8133,0.9600);">Abc</div>
<div class="t" style="left:17.90px;top:387.44px;font-size:8px;color:#4a7fa3;font-weight:bold;transform:scale(0.8133,0.9600);">Abc</div>
<div class="t" style="left:17.90px;top:406.94px;font-size:8px;color:#4a7fa3;font-weight:bold;transform:scale(0.8133,0.9600);">Abc</div>
<div class="t" style="left:17.90px;top:426.44px;font-size:8px;color:#4a7fa3;font-weight:bold;transform:scale(0.8133,0.9600);">Abc</div>
<div class="t" style="left:17.90px;top:445.94px;font-size:8px;color:#4a7fa3;font-weight:bold;transform:scale(0.8133,0.9600);">Abc</div>
<div class="t" style="left:17.90px;top:465.44px;font-size:8px;color:#4a7fa3;font-weight:bold;transform:scale(0.8133,0.9600);">Abc</div>
<div class="t" style="left:17.90px;top:484.94px;font-size:8px;color:#4a7fa3;font-weight:bold;transform:scale(0.8133,0.9600);">Abc</div>
<div class="t" style="left:17.90px;top:504.44px;font-size:8px;color:#4a7fa3;font-weight:bold;transform:scale(0.8133,0.9600);">Abc</div>
<div class="t" style="left:372.7px;top:438.5px;font-size:12px;color:#555;transform:translate(-50%,-50%) rotate(-90deg) scale(0.87,0.9);transform-origin:50% 50%">売上</div>
</body></html>
